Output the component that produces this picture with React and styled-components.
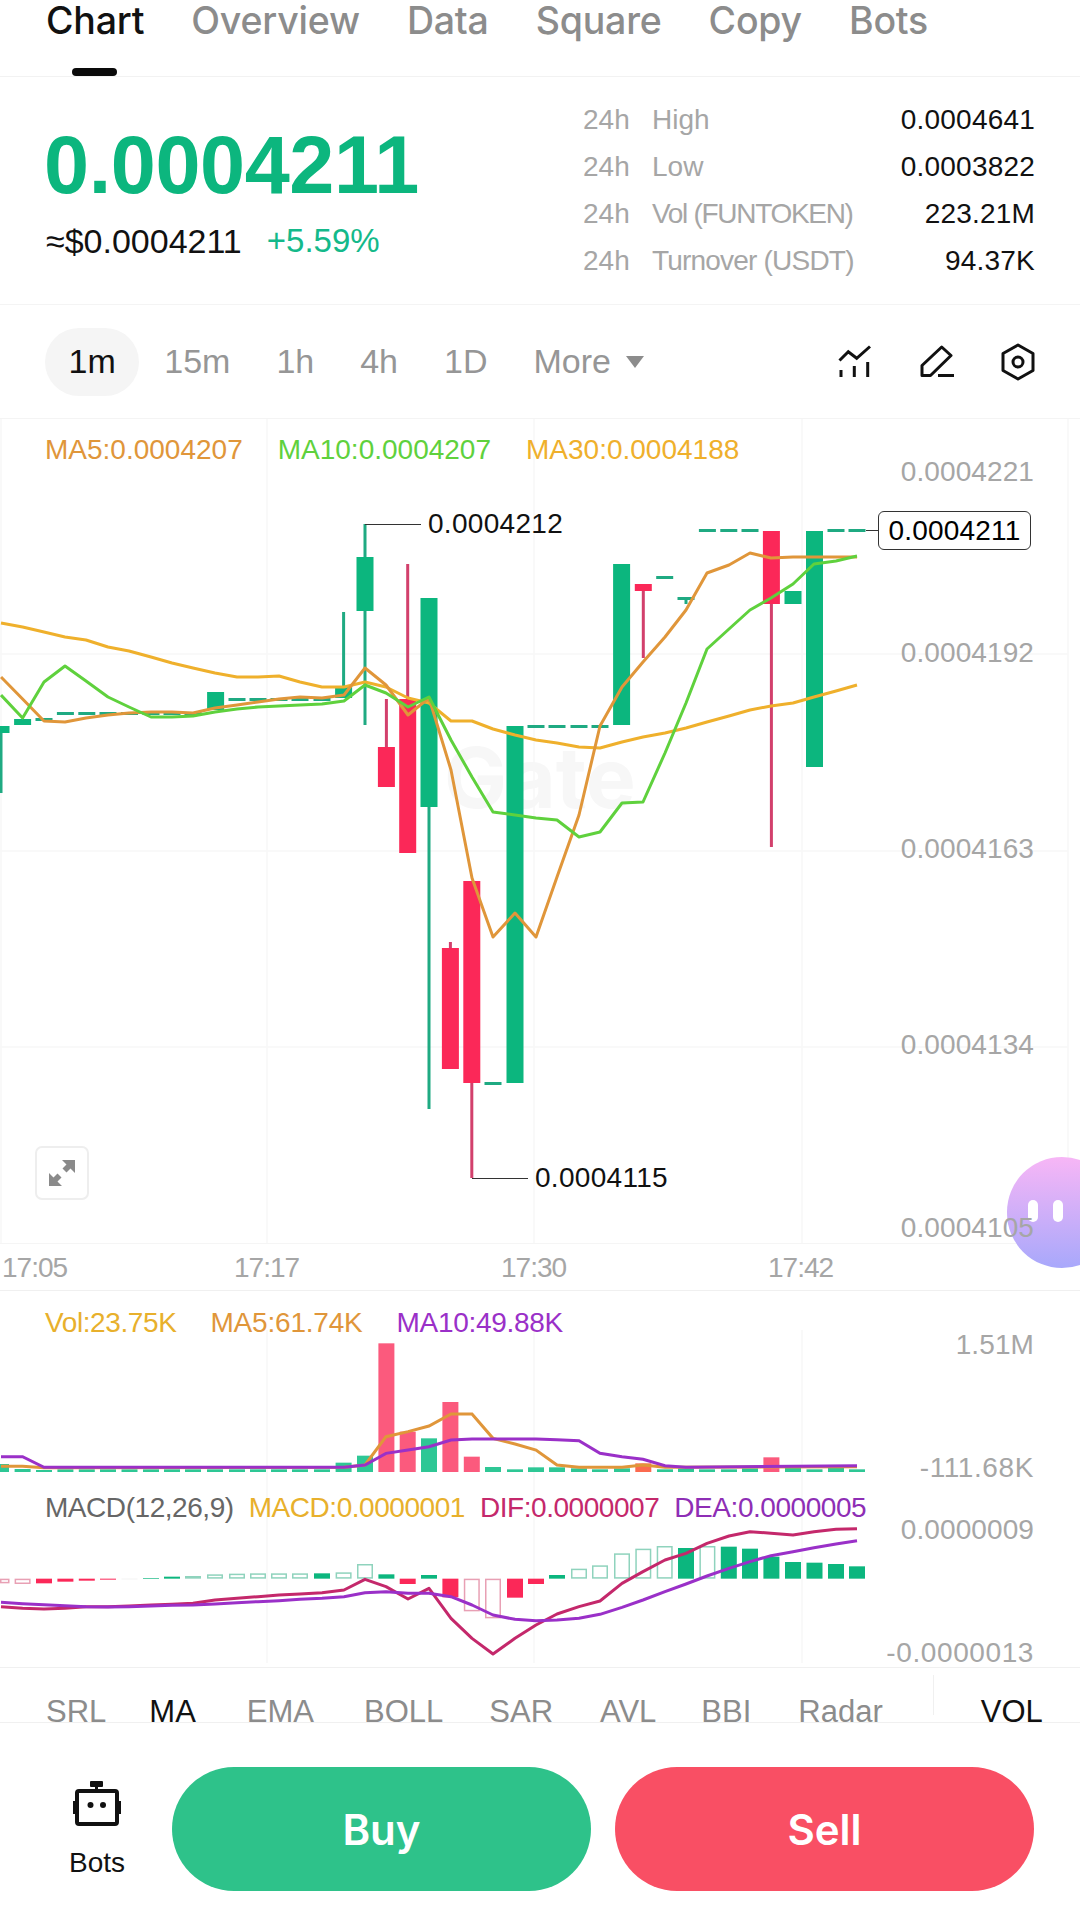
import React from "react";
import styled, { createGlobalStyle } from "styled-components";

const UP = "#0cb67e";
const DOWN = "#fb2858";
const UP_WICK = "#1faa82";
const DOWN_WICK = "#d2406c";
const MA5_C = "#e0963a";
const MA10_C = "#5fd13d";
const MA30_C = "#efb02c";
const GRID = "#f7f7f7";
const AXIS = "#a6a6a6";

const GlobalStyle = createGlobalStyle`
  html, body { margin: 0; padding: 0; background: #fff; }
  body { font-family: "Liberation Sans", Arial, sans-serif; }
  * { box-sizing: border-box; }
`;

const Page = styled.div`
  width: 1080px;
  height: 1930px;
  display: flex;
  flex-direction: column;
  overflow: hidden;
  background: #fff;
  color: #111;
`;

const Tabs = styled.nav`
  height: 77px;
  flex: none;
  display: flex;
  gap: 47px;
  padding: 0 46px;
  border-bottom: 1px solid #f2f2f2;
`;
const Tab = styled.div`
  position: relative;
  height: 76px;
  padding-top: 1px;
  line-height: 40px;
  font-family: Inter, sans-serif;
  font-size: 37.5px;
  font-weight: 500;
  letter-spacing: -0.2px;
  color: ${(p) => (p.$active ? "#111" : "#8c8c8c")};
  ${(p) =>
    p.$active &&
    `&::after {
      content: "";
      position: absolute;
      left: 26px;
      bottom: 0;
      width: 45px;
      height: 8px;
      border-radius: 4px;
      background: #0a0a0a;
    }`}
`;

const Summary = styled.section`
  height: 228px;
  flex: none;
  display: flex;
  align-items: center;
  justify-content: space-between;
  padding: 0 45px 0 46px;
  border-bottom: 1px solid #f4f4f4;
`;
const PriceBlock = styled.div`
  display: flex;
  flex-direction: column;
  gap: 15px;
  padding-top: 4px;
`;
const BigPrice = styled.div`
  margin-left: -2px;
  font-size: 81px;
  line-height: 82px;
  font-weight: 700;
  letter-spacing: -0.4px;
  color: ${UP};
`;
const SubPrice = styled.div`
  display: flex;
  gap: 25px;
  line-height: 40px;
`;
const Fiat = styled.span`
  font-size: 34px;
  color: #111;
`;
const Change = styled.span`
  font-size: 33px;
  color: #14b98a;
`;
const Stats = styled.div`
  width: 452px;
  display: flex;
  flex-direction: column;
  font-size: 28px;
`;
const StatRow = styled.div`
  height: 47px;
  display: flex;
  align-items: center;
`;
const StatPeriod = styled.span`
  width: 69px;
  color: ${AXIS};
`;
const StatLabel = styled.span`
  flex: 1;
  color: ${AXIS};
  letter-spacing: ${(p) => p.$track}px;
`;
const StatValue = styled.span`
  color: #111;
  letter-spacing: 0.2px;
`;

const Toolbar = styled.div`
  height: 114px;
  flex: none;
  display: flex;
  align-items: center;
  padding: 0 44px 0 45px;
  border-bottom: 1px solid #f4f4f4;
`;
const Interval = styled.div`
  height: 68px;
  padding: 0 ${(p) => (p.$active ? 23.5 : 25)}px;
  margin-right: ${(p) => (p.$active ? 0 : -4)}px;
  display: flex;
  align-items: center;
  gap: 15px;
  border-radius: 34px;
  font-size: 34px;
  background: ${(p) => (p.$active ? "#f5f5f5" : "transparent")};
  color: ${(p) => (p.$active ? "#111" : "#969696")};
`;
const Caret = styled.i`
  width: 0;
  height: 0;
  border-left: 9px solid transparent;
  border-right: 9px solid transparent;
  border-top: 12px solid #8c8c8c;
`;
const ToolIcons = styled.div`
  margin-left: auto;
  display: flex;
  align-items: center;
  gap: 46px;
  svg { display: block; }
`;

const Pane = styled.div`
  position: relative;
  flex: none;
  height: ${(p) => p.$h}px;
`;
const PaneDrawing = styled.svg`
  position: absolute;
  left: 0;
  top: 0;
  width: 1080px;
  height: 100%;
  display: block;
`;
const Legend = styled.div`
  position: relative;
  display: flex;
  gap: ${(p) => p.$gap}px;
  padding: ${(p) => p.$top}px 0 0 45px;
  font-size: 28px;
  line-height: 34px;
  white-space: nowrap;
  letter-spacing: ${(p) => p.$track || 0}px;
`;
const LegendItem = styled.span`
  color: ${(p) => p.$c};
  letter-spacing: ${(p) => (p.$track === undefined ? "inherit" : `${p.$track}px`)};
`;
const AxisLabel = styled.span`
  position: absolute;
  right: 46px;
  top: ${(p) => p.$y - 17}px;
  font-size: 28px;
  line-height: 34px;
  letter-spacing: ${(p) => (p.$wide ? 0.6 : 0.1)}px;
  color: ${AXIS};
  z-index: 3;
`;
const PriceFlag = styled.span`
  position: absolute;
  left: 878px;
  top: 92px;
  width: 153px;
  height: 39px;
  display: flex;
  align-items: center;
  justify-content: center;
  border: 1px solid #333;
  border-radius: 6px;
  background: #fff;
  font-size: 28px;
  letter-spacing: 0.2px;
  color: #000;
`;
const Extreme = styled.span`
  position: absolute;
  left: ${(p) => p.$x}px;
  top: ${(p) => p.$y - 17}px;
  font-size: 28px;
  line-height: 34px;
  letter-spacing: 0.3px;
  color: #111;
`;
const Watermark = styled.span`
  position: absolute;
  left: 444px;
  top: 314px;
  font-family: Inter, sans-serif;
  font-size: 84px;
  line-height: 90px;
  font-weight: 700;
  color: #f7f7f7;
`;
const ExpandButton = styled.div`
  position: absolute;
  left: 35px;
  top: 727px;
  width: 54px;
  height: 54px;
  display: flex;
  align-items: center;
  justify-content: center;
  border: 2px solid #eee;
  border-radius: 7px;
  background: #fff;
`;
const Assistant = styled.div`
  position: absolute;
  left: 1007px;
  top: 738px;
  width: 110px;
  height: 111px;
  display: flex;
  gap: 15px;
  padding: 43px 0 0 21px;
  border-radius: 55px;
  background: linear-gradient(180deg, #f7b6f6 0%, #a8a8fb 100%);
  z-index: 2;
`;
const Eye = styled.i`
  width: 10px;
  height: 22px;
  border-radius: 5px;
  background: #fff;
`;

const TimeAxis = styled.div`
  position: relative;
  height: 48px;
  flex: none;
  border-top: 1px solid #f5f5f5;
  border-bottom: 1px solid #f0f0f0;
`;
const TimeLabel = styled.span`
  position: absolute;
  left: ${(p) => p.$x}px;
  top: 7px;
  font-size: 28px;
  line-height: 34px;
  letter-spacing: -1px;
  color: ${AXIS};
`;

const IndicatorTabs = styled.div`
  height: 56px;
  flex: none;
  display: flex;
  align-items: flex-end;
  padding-left: 46px;
  border-top: 1px solid #f0f0f0;
  border-bottom: 1px solid #f0f0f0;
  font-size: 31px;
`;
const Indicator = styled.span`
  margin-right: ${(p) => p.$gap}px;
  line-height: 34px;
  height: 27px;
  color: ${(p) => (p.$active ? "#111" : "#8c8c8c")};
`;
const IndicatorDivider = styled.i`
  align-self: center;
  width: 1px;
  height: 40px;
  margin-right: 47px;
  background: #f0f0f0;
`;

const Footer = styled.footer`
  flex: 1;
  display: flex;
  align-items: flex-start;
  padding: 44px 45px 0 0;
`;
const BotsLink = styled.div`
  width: 172px;
  padding: 14px 0 0 48px;
`;
const BotsInner = styled.div`
  width: 98px;
  display: flex;
  flex-direction: column;
  align-items: center;
  gap: 21px;
  font-size: 28px;
  line-height: 32px;
  svg { display: block; }
`;
const Action = styled.button`
  width: 419px;
  height: 124px;
  border: 0;
  border-radius: 62px;
  font-family: Inter, sans-serif;
  font-size: 42px;
  font-weight: 600;
  color: #fff;
  background: ${(p) => p.$bg};
  margin-left: ${(p) => p.$ml || 0}px;
`;

/* ---------- chart data (page coordinates) ---------- */
const mainX = [1, 22.6, 44, 65, 86, 108, 129, 151, 172, 193, 215, 237, 258, 279, 300, 322, 344, 365, 386, 408, 429, 451, 472, 493, 515, 536, 557, 579, 600, 622, 643, 665, 686, 707, 729, 750, 771, 793, 814, 836, 857];
const ma30 = [623, 627, 632, 637, 640, 647, 651, 657, 663, 668, 673, 677, 677, 676, 682, 687, 687, 682, 687, 698, 703, 721, 721, 729, 735, 740, 743, 747, 748, 742, 737, 733, 728, 722, 716, 710, 706, 703, 697, 691, 685];
const ma5 = [677, 699, 721, 722, 718, 715, 713, 712, 712, 713, 708, 705, 702, 699, 697, 698, 695, 668, 685, 715, 698, 770, 878, 937, 913, 937, 877, 815, 726, 687, 662, 637, 610, 573, 565, 553, 558, 557, 557, 557, 557];
const ma10 = [695, 718, 682, 666, 681, 697, 707, 717, 717, 716, 712, 709, 707, 706, 705, 704, 701, 685, 693, 707, 697, 740, 777, 812, 815, 818, 820, 837, 832, 803, 802, 753, 703, 649, 629, 610, 598, 584, 564, 561, 556];

const poly = (xs, ys) => xs.map((x, i) => `${x},${ys[i]}`).join(" ");

// x, top, bottom, wickTop, wickBottom, up
const candles = [
  [1, 726, 733, 726, 793, true],
  [22.6, 719, 725, 719, 725, true],
  [215.6, 692, 710, 692, 710, true],
  [343.6, 687, 698, 612, 698, true],
  [365, 557, 611, 524, 725, true],
  [386.4, 747, 787, 699, 787, false],
  [407.7, 699, 853, 564, 853, false],
  [429, 598, 807, 598, 1109, true],
  [450.4, 948, 1069, 942, 1069, false],
  [471.8, 881, 1083, 881, 1178, false],
  [515, 726, 1083, 726, 1083, true],
  [621.6, 564, 725, 564, 725, true],
  [643.3, 584, 591, 584, 658, false],
  [771.4, 531, 604, 531, 847, false],
  [793, 591, 604, 591, 604, true],
  [814.5, 531, 767, 531, 767, true],
];
const flats = [
  [44, 719], [65.4, 713], [86.8, 713], [108, 713], [129.5, 713], [151, 713], [172, 713], [193, 713],
  [237, 699], [258, 699], [279, 699], [300, 699], [322, 699],
  [493, 1083], [536, 726], [557, 726], [579, 726], [600, 726],
  [664.7, 577], [686, 598], [707.4, 530], [728.8, 530], [750, 530], [836, 530], [857, 530],
];
const gridV = [1, 267, 534, 802, 1068];

const vol = (v) => 1290 + v / 3;
const volBars = [
  [1, 522, true], [22.6, 537, true], [44, 540, true],
  ...[65.4, 86.8, 108, 129.5, 151, 172, 193, 215, 237, 258, 279, 300, 322].map((x) => [x, 538, true]),
  [343.6, 518, true], [365, 497, true], [386.4, 160, false], [407.7, 425, false], [429, 445, true],
  [450.4, 336, false], [471.8, 500, false], [493, 531, true], [515, 538, true], [536, 532, true],
  [557, 532, true], [579, 535, true], [600, 538, true], [622, 535, true], [643.3, 520, false, true],
  [665, 538, true], [686, 535, true], [707, 538, true], [729, 538, true], [750, 535, true],
  [771.4, 502, false], [793, 533, true], [814.5, 538, true], [836, 533, true], [857, 538, true],
];
const volMa5 = [[1, 529], [22.6, 529], [44, 533], [344, 532], [365, 525], [386, 440], [408, 425], [429, 408], [451, 372], [472, 372], [493, 445], [515, 462], [536, 480], [557, 525], [579, 532], [622, 532], [643, 525], [665, 532], [857, 530]];
const volMa10 = [[1, 500], [22.6, 500], [44, 532], [344, 532], [365, 525], [386, 490], [408, 480], [429, 470], [451, 450], [472, 447], [536, 447], [557, 449], [579, 452], [600, 490], [622, 500], [643, 508], [665, 527], [686, 532], [857, 527]];

// x, top, bottom, filled, up
const macdBars = [
  [5, 866, 880, 0, 0], [22.6, 866, 882, 0, 0], [44, 866, 880, 1, 0], [65.4, 866, 875, 1, 0], [86.8, 866, 872, 1, 0], [108, 866, 869, 1, 0], [129.5, 866, 868, 2, 1],
  [151, 864, 866, 1, 1], [172, 860, 866, 1, 1], [193, 858, 866, 0, 1], [215, 853, 866, 0, 1], [237, 851, 866, 0, 1],
  [258, 850, 866, 0, 1], [279, 850, 866, 0, 1], [300, 850, 866, 0, 1], [322, 850, 866, 1, 1], [343.6, 847, 866, 0, 1],
  [365, 822, 866, 0, 1], [386.4, 853, 866, 1, 1], [407.7, 866, 882, 1, 0], [429, 855, 866, 1, 1], [450.4, 866, 922, 1, 0],
  [471.8, 866, 964, 0, 0], [493, 866, 985, 0, 0], [515, 866, 923, 1, 0], [536, 866, 882, 1, 0], [557, 855, 866, 1, 1],
  [579, 836, 866, 0, 1], [600, 826, 866, 0, 1], [622, 790, 866, 0, 1], [643.3, 776, 866, 0, 1], [664.7, 768, 866, 0, 1],
  [686, 774, 866, 1, 1], [707.4, 768, 866, 0, 1], [728.8, 770, 866, 1, 1], [750, 776, 866, 1, 1], [771.4, 800, 866, 1, 1],
  [793, 816, 866, 1, 1], [814.5, 818, 866, 1, 1], [836, 822, 866, 1, 1], [857, 829, 866, 1, 1],
];
const dif = [950, 955, 957, 955, 950, 950, 948, 945, 943, 940, 930, 925, 920, 915, 912, 908, 900, 868, 890, 927, 895, 985, 1045, 1092, 1045, 1005, 972, 950, 933, 880, 845, 810, 790, 760, 738, 725, 730, 735, 725, 718, 716];
const dea = [937, 941, 944, 947, 950, 951, 950, 948, 946, 945, 942, 938, 935, 932, 928, 925, 920, 908, 905, 910, 910, 920, 945, 975, 988, 992, 990, 985, 973, 952, 930, 905, 882, 858, 835, 815, 797, 785, 773, 762, 752];

/* ---------- drawings ---------- */
const IndicatorIcon = () => (
  <svg width="36" height="34" viewBox="0 0 36 34" fill="none" stroke="#111" strokeWidth="3" strokeLinejoin="miter">
    <path d="M1.5 15.5 L10.3 6.7 L18.7 13.3 L32 1.5" />
    <path d="M3 32 V25 M16.3 32 V21 M29.7 32 V17" />
  </svg>
);
const PencilIcon = () => (
  <svg width="34" height="34" viewBox="0 0 34 34" fill="none" stroke="#111" strokeWidth="3" strokeLinejoin="round">
    <path d="M2 30.5 V20.5 L21.7 2 L31 10.5 L10.5 30.5 Z" />
    <path d="M18 30.5 H34" />
  </svg>
);
const HexIcon = () => (
  <svg width="36" height="38" viewBox="0 0 36 38" fill="none" stroke="#111" strokeWidth="3" strokeLinejoin="round">
    <path d="M18 2 L33 10.5 V27.5 L18 36 L3 27.5 V10.5 Z" />
    <circle cx="18" cy="19" r="5" />
  </svg>
);
const ExpandIcon = () => (
  <svg width="28" height="28" viewBox="0 0 28 28" fill="#8a8a8a">
    <path d="M27 1 V14 L22.5 9.5 L18.5 13.5 L14.5 9.5 L18.5 5.5 L14 1 Z" />
    <path d="M1 27 V14 L5.5 18.5 L9.5 14.5 L13.5 18.5 L9.5 22.5 L14 27 Z" />
  </svg>
);
const BotIcon = () => (
  <svg width="48" height="45" viewBox="0 0 48 45">
    <rect x="17" y="0" width="13" height="6" rx="1" fill="#111" />
    <rect x="22" y="6" width="3" height="5" fill="#111" />
    <rect x="4" y="10" width="40" height="33" rx="2" fill="none" stroke="#111" strokeWidth="4" />
    <rect x="0" y="20" width="3" height="13" fill="#111" />
    <rect x="45" y="20" width="3" height="13" fill="#111" />
    <circle cx="17.5" cy="24" r="3" fill="#111" />
    <circle cx="30" cy="24" r="3" fill="#111" />
  </svg>
);

const MainDrawing = () => (
  <PaneDrawing viewBox="0 419 1080 824">
    {gridV.map((x) => (
      <line key={x} x1={x} x2={x} y1="419" y2="1243" stroke={GRID} strokeWidth="1.5" />
    ))}
    {[654, 851, 1047].map((y) => (
      <line key={y} x1="0" x2="1068" y1={y} y2={y} stroke={GRID} strokeWidth="1.5" />
    ))}
    {candles.map(([x, t, b, wt, wb, up]) => (
      <g key={x}>
        <rect x={x - 1.5} y={wt} width="3" height={wb - wt} fill={up ? UP_WICK : DOWN_WICK} />
        <rect x={x - 8.5} y={t} width="17" height={b - t} fill={up ? UP : DOWN} />
      </g>
    ))}
    {flats.map(([x, y]) => (
      <rect key={x} x={x - 8.5} y={y - 1} width="17" height="3" fill={UP_WICK} />
    ))}
    <rect x="684.5" y="598" width="3" height="6" fill={UP_WICK} />
    <path d="M365 524.5 H421 M472 1178.5 H528 M866 530.5 H878" stroke="#333" strokeWidth="1.2" fill="none" />
    <polyline points={poly(mainX, ma30)} fill="none" stroke={MA30_C} strokeWidth="3" strokeLinejoin="round" />
    <polyline points={poly(mainX, ma5)} fill="none" stroke={MA5_C} strokeWidth="3" strokeLinejoin="round" />
    <polyline points={poly(mainX, ma10)} fill="none" stroke={MA10_C} strokeWidth="3" strokeLinejoin="round" />
  </PaneDrawing>
);

const VolumeDrawing = () => (
  <PaneDrawing viewBox="0 1291 1080 187">
    {gridV.slice(1, 4).map((x) => (
      <line key={x} x1={x} x2={x} y1="1330" y2="1478" stroke={GRID} strokeWidth="1.5" />
    ))}
    {volBars.map(([x, v, up, orange]) => (
      <rect
        key={x}
        x={x - 8}
        y={vol(v)}
        width="16"
        height={1472 - vol(v)}
        fill={orange ? "#fb6a4f" : up ? "#2ec795" : "#fb5a7d"}
      />
    ))}
    <polyline points={volMa5.map(([x, v]) => `${x},${vol(v)}`).join(" ")} fill="none" stroke={MA5_C} strokeWidth="3" />
    <polyline points={volMa10.map(([x, v]) => `${x},${vol(v)}`).join(" ")} fill="none" stroke="#9a30c8" strokeWidth="3" />
  </PaneDrawing>
);

const MacdDrawing = () => (
  <PaneDrawing viewBox="0 1478 1080 189">
    {gridV.slice(1, 4).map((x) => (
      <line key={x} x1={x} x2={x} y1="1478" y2="1663" stroke={GRID} strokeWidth="1.5" />
    ))}
    {macdBars.map(([x, t, b, filled, up]) => {
      const color = filled === 2 ? "#eeeeee" : up ? "#0cb67e" : "#fb2858";
      const line = up ? "#8fd3bd" : "#e8a0b4";
      const x0 = x === 5 ? 0 : x - 8;
      const w = x === 5 ? 9.5 : 16;
      return filled ? (
        <rect key={x} x={x0} y={vol(t)} width={w} height={vol(b) - vol(t)} fill={color} />
      ) : (
        <rect
          key={x}
          x={x0 + 0.75}
          y={vol(t) + 0.75}
          width={w - 1.5}
          height={vol(b) - vol(t) - 1.5}
          fill="none"
          stroke={line}
          strokeWidth="1.5"
        />
      );
    })}
    <polyline points={poly(mainX, dif.map(vol))} fill="none" stroke="#c4286b" strokeWidth="3" strokeLinejoin="round" />
    <polyline points={poly(mainX, dea.map(vol))} fill="none" stroke="#9a30c8" strokeWidth="3" strokeLinejoin="round" />
  </PaneDrawing>
);

const stats = [
  ["High", "0.0004641", 0],
  ["Low", "0.0003822", 0],
  ["Vol (FUNTOKEN)", "223.21M", -1.3],
  ["Turnover (USDT)", "94.37K", -0.8],
];
const indicators = [
  ["SRL", 43],
  ["MA", 51],
  ["EMA", 50],
  ["BOLL", 46],
  ["SAR", 47],
  ["AVL", 45],
  ["BBI", 47],
  ["Radar", 50],
];

export default function App() {
  return (
    <Page>
      <GlobalStyle />
      <Tabs>
        <Tab $active>Chart</Tab>
        <Tab>Overview</Tab>
        <Tab>Data</Tab>
        <Tab>Square</Tab>
        <Tab>Copy</Tab>
        <Tab>Bots</Tab>
      </Tabs>

      <Summary>
        <PriceBlock>
          <BigPrice>0.0004211</BigPrice>
          <SubPrice>
            <Fiat>≈$0.0004211</Fiat>
            <Change>+5.59%</Change>
          </SubPrice>
        </PriceBlock>
        <Stats>
          {stats.map(([label, value, track]) => (
            <StatRow key={label}>
              <StatPeriod>24h</StatPeriod>
              <StatLabel $track={track}>{label}</StatLabel>
              <StatValue>{value}</StatValue>
            </StatRow>
          ))}
        </Stats>
      </Summary>

      <Toolbar>
        <Interval $active>1m</Interval>
        <Interval>15m</Interval>
        <Interval>1h</Interval>
        <Interval>4h</Interval>
        <Interval>1D</Interval>
        <Interval>
          More
          <Caret />
        </Interval>
        <ToolIcons>
          <IndicatorIcon />
          <PencilIcon />
          <HexIcon />
        </ToolIcons>
      </Toolbar>

      <Pane $h={824}>
        <Watermark>Gate</Watermark>
        <MainDrawing />
        <Legend $gap={35} $top={14}>
          <LegendItem $c={MA5_C}>MA5:0.0004207</LegendItem>
          <LegendItem $c={MA10_C}>MA10:0.0004207</LegendItem>
          <LegendItem $c={MA30_C}>MA30:0.0004188</LegendItem>
        </Legend>
        <AxisLabel $y={53}>0.0004221</AxisLabel>
        <AxisLabel $y={234}>0.0004192</AxisLabel>
        <AxisLabel $y={430}>0.0004163</AxisLabel>
        <AxisLabel $y={626}>0.0004134</AxisLabel>
        <AxisLabel $y={809}>0.0004105</AxisLabel>
        <PriceFlag>0.0004211</PriceFlag>
        <Extreme $x={428} $y={105}>0.0004212</Extreme>
        <Extreme $x={535} $y={759}>0.0004115</Extreme>
        <ExpandButton>
          <ExpandIcon />
        </ExpandButton>
        <Assistant>
          <Eye />
          <Eye />
        </Assistant>
      </Pane>

      <TimeAxis>
        <TimeLabel $x={2}>17:05</TimeLabel>
        <TimeLabel $x={234}>17:17</TimeLabel>
        <TimeLabel $x={501}>17:30</TimeLabel>
        <TimeLabel $x={768}>17:42</TimeLabel>
      </TimeAxis>

      <Pane $h={187}>
        <VolumeDrawing />
        <Legend $gap={34} $top={15}>
          <LegendItem $c="#e8b02c" $track={-0.4}>Vol:23.75K</LegendItem>
          <LegendItem $c={MA5_C} $track={-0.2}>MA5:61.74K</LegendItem>
          <LegendItem $c="#9a30c8" $track={-0.3}>MA10:49.88K</LegendItem>
        </Legend>
        <AxisLabel $y={54}>1.51M</AxisLabel>
        <AxisLabel $y={177} $wide>-111.68K</AxisLabel>
      </Pane>

      <Pane $h={189}>
        <MacdDrawing />
        <Legend $gap={15} $top={13} $track={-0.45}>
          <LegendItem $c="#666">MACD(12,26,9)</LegendItem>
          <LegendItem $c="#e8b02c">MACD:0.0000001</LegendItem>
          <LegendItem $c="#c4286b">DIF:0.0000007</LegendItem>
          <LegendItem $c="#8e2eb5">DEA:0.0000005</LegendItem>
        </Legend>
        <AxisLabel $y={52}>0.0000009</AxisLabel>
        <AxisLabel $y={175} $wide>-0.0000013</AxisLabel>
      </Pane>

      <IndicatorTabs>
        {indicators.map(([name, gap]) => (
          <Indicator key={name} $gap={gap} $active={name === "MA"}>
            {name}
          </Indicator>
        ))}
        <IndicatorDivider />
        <Indicator $active $gap={0}>
          VOL
        </Indicator>
      </IndicatorTabs>

      <Footer>
        <BotsLink>
          <BotsInner>
            <BotIcon />
            Bots
          </BotsInner>
        </BotsLink>
        <Action $bg="#2ec28a">Buy</Action>
        <Action $bg="#f94f64" $ml={24}>
          Sell
        </Action>
      </Footer>
    </Page>
  );
}
